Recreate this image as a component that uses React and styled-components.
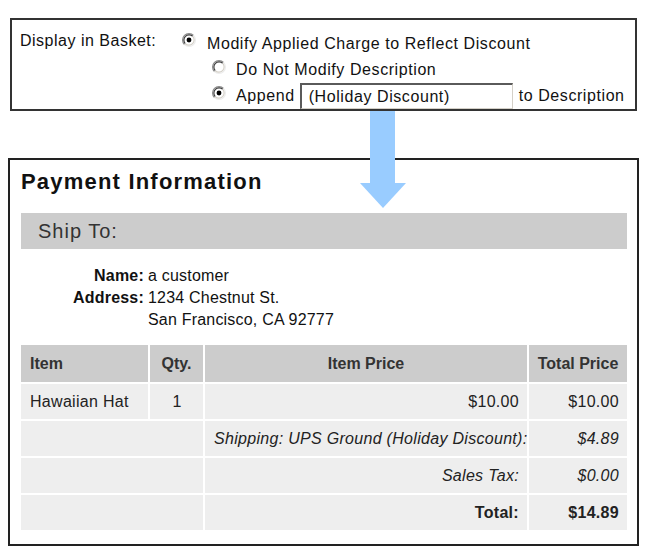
import React from "react";
import styled, { createGlobalStyle } from "styled-components";

const GlobalStyle = createGlobalStyle`
  body {
    margin: 0;
    background: #fff;
    font-family: "Liberation Sans", Arial, sans-serif;
    color: #111;
  }
`;

const Page = styled.div`
  position: relative;
  width: 648px;
  height: 554px;
  box-sizing: border-box;
  padding: 18px 0 0 8px;
`;

/* ---------- basket settings box ---------- */

const SettingsBox = styled.div`
  margin-left: 2px;
  width: 627px;
  height: 93px;
  box-sizing: border-box;
  border: 2px solid #333;
  padding: 10px 0 0 8px;
  display: grid;
  grid-template-columns: 162px 1fr;
  font-size: 16px;
  letter-spacing: 0.58px;
  color: #111;
`;

const SettingLabel = styled.div`
  line-height: 27px;
  margin-top: -3px;
  letter-spacing: 0.5px;
`;

const Options = styled.div`
  display: flex;
  flex-direction: column;
`;

const OptionRow = styled.div`
  display: flex;
  align-items: center;
  height: ${(p) => p.$height}px;
  padding-left: ${(p) => (p.$indent ? 30 : 0)}px;
  gap: ${(p) => (p.$indent ? 10 : 11)}px;
  white-space: nowrap;
`;

const RadioMark = styled.svg`
  flex-shrink: 0;
  margin-bottom: 7px;
`;

const Inline = styled.span`
  display: flex;
  align-items: center;
`;

const TextInput = styled.input`
  width: 213px;
  height: 26px;
  box-sizing: border-box;
  margin: 0 6px 0 5px;
  padding: 0 0 0 7px;
  border-top: 2px solid #5a5a5a;
  border-left: 2px solid #5a5a5a;
  border-right: 1px solid #d4d0c8;
  border-bottom: 1px solid #d4d0c8;
  font: inherit;
  letter-spacing: inherit;
  color: #111;
  background: #fff;
  outline: none;
`;

const Radio = ({ checked }) => (
  <RadioMark width="14" height="14" viewBox="0 0 12 12">
    <circle cx="6" cy="6" r="5" fill="#fff" />
    <path d="M2.11 9.89 A5.5 5.5 0 0 1 9.89 2.11" fill="none" stroke="#8a8a8a" strokeWidth="1" />
    <path d="M9.89 2.11 A5.5 5.5 0 0 1 2.11 9.89" fill="none" stroke="#ececec" strokeWidth="1" />
    <path d="M2.82 9.18 A4.5 4.5 0 0 1 9.18 2.82" fill="none" stroke="#3c3c3c" strokeWidth="1" />
    <path d="M9.18 2.82 A4.5 4.5 0 0 1 2.82 9.18" fill="none" stroke="#d4d0c8" strokeWidth="1" />
    {checked && <circle cx="6" cy="6" r="2.1" fill="#000" />}
  </RadioMark>
);

/* ---------- arrow ---------- */

const Arrow = styled.svg`
  position: absolute;
  left: 360px;
  top: 111px;
`;

/* ---------- payment box ---------- */

const PaymentBox = styled.div`
  margin-top: 47px;
  width: 631px;
  height: 388px;
  box-sizing: border-box;
  border: 2px solid #222;
  padding: 10px 10px 0 11px;
`;

const Title = styled.h2`
  margin: 0;
  font-size: 22px;
  line-height: 24px;
  font-weight: bold;
  letter-spacing: 1.2px;
  color: #111;
`;

const SectionBar = styled.div`
  margin-top: 19px;
  height: 36px;
  display: flex;
  align-items: center;
  padding-left: 17px;
  background: #cccccc;
  font-size: 20px;
  letter-spacing: 1px;
  color: #333;
`;

const InfoGrid = styled.div`
  display: grid;
  grid-template-columns: 123px auto;
  column-gap: 4px;
  margin-top: 16px;
  line-height: 22px;
  font-size: 16px;
  letter-spacing: 0.2px;
`;

const InfoLabel = styled.div`
  font-weight: bold;
  text-align: right;
`;

const OrderTable = styled.table`
  margin: 12px 0 0 -2px;
  width: 610px;
  border-spacing: 2px;
  table-layout: fixed;
  font-size: 16px;
  letter-spacing: 0.3px;
`;

const HeadCell = styled.th`
  box-sizing: border-box;
  width: ${(p) => p.$width}px;
  height: 37px;
  padding: 0 ${(p) => (p.$align === "left" ? "0 0 9px" : "4px")};
  background: #cccccc;
  color: #333;
  font-weight: bold;
  letter-spacing: 0;
  text-align: ${(p) => p.$align || "center"};
  white-space: nowrap;
`;

const Cell = styled.td`
  box-sizing: border-box;
  height: 35px;
  padding: 0 8px 0 9px;
  background: #eeeeee;
  color: #222;
  text-align: ${(p) => p.$align || "left"};
  font-style: ${(p) => (p.$italic ? "italic" : "normal")};
  font-weight: ${(p) => (p.$bold ? "bold" : "normal")};
  white-space: nowrap;
`;

const summary = [
  { label: "Shipping: UPS Ground (Holiday Discount):", value: "$4.89", italic: true },
  { label: "Sales Tax:", value: "$0.00", italic: true },
  { label: "Total:", value: "$14.89", bold: true },
];

export default function App() {
  return (
    <Page>
      <GlobalStyle />
      <SettingsBox>
        <SettingLabel>Display in Basket:</SettingLabel>
        <Options>
          <OptionRow $height={27}>
            <Radio checked />
            <span>Modify Applied Charge to Reflect Discount</span>
          </OptionRow>
          <OptionRow $height={26} $indent>
            <Radio />
            <span>Do Not Modify Description</span>
          </OptionRow>
          <OptionRow $height={26} $indent>
            <Radio checked />
            <Inline>
              Append
              <TextInput readOnly defaultValue="(Holiday Discount)" />
              to Description
            </Inline>
          </OptionRow>
        </Options>
      </SettingsBox>

      <PaymentBox>
        <Title>Payment Information</Title>
        <SectionBar>Ship To:</SectionBar>
        <InfoGrid>
          <InfoLabel>Name:</InfoLabel>
          <div>a customer</div>
          <InfoLabel>Address:</InfoLabel>
          <div>1234 Chestnut St.</div>
          <div />
          <div>San Francisco, CA 92777</div>
        </InfoGrid>
        <OrderTable>
          <thead>
            <tr>
              <HeadCell $width={127} $align="left">Item</HeadCell>
              <HeadCell $width={53}>Qty.</HeadCell>
              <HeadCell $width={322}>Item Price</HeadCell>
              <HeadCell $width={98}>Total Price</HeadCell>
            </tr>
          </thead>
          <tbody>
            <tr>
              <Cell>Hawaiian Hat</Cell>
              <Cell $align="center">1</Cell>
              <Cell $align="right">$10.00</Cell>
              <Cell $align="right">$10.00</Cell>
            </tr>
            {summary.map((row) => (
              <tr key={row.label}>
                <Cell colSpan={2} />
                <Cell $align="right" $italic={row.italic} $bold={row.bold}>
                  {row.label}
                </Cell>
                <Cell $align="right" $italic={row.italic} $bold={row.bold}>
                  {row.value}
                </Cell>
              </tr>
            ))}
          </tbody>
        </OrderTable>
      </PaymentBox>

      <Arrow width="46" height="97" viewBox="0 0 46 97">
        <rect x="10" y="0" width="25" height="72" fill="#99ccff" />
        <polygon points="0,72 46,72 23,97" fill="#99ccff" />
      </Arrow>
    </Page>
  );
}
